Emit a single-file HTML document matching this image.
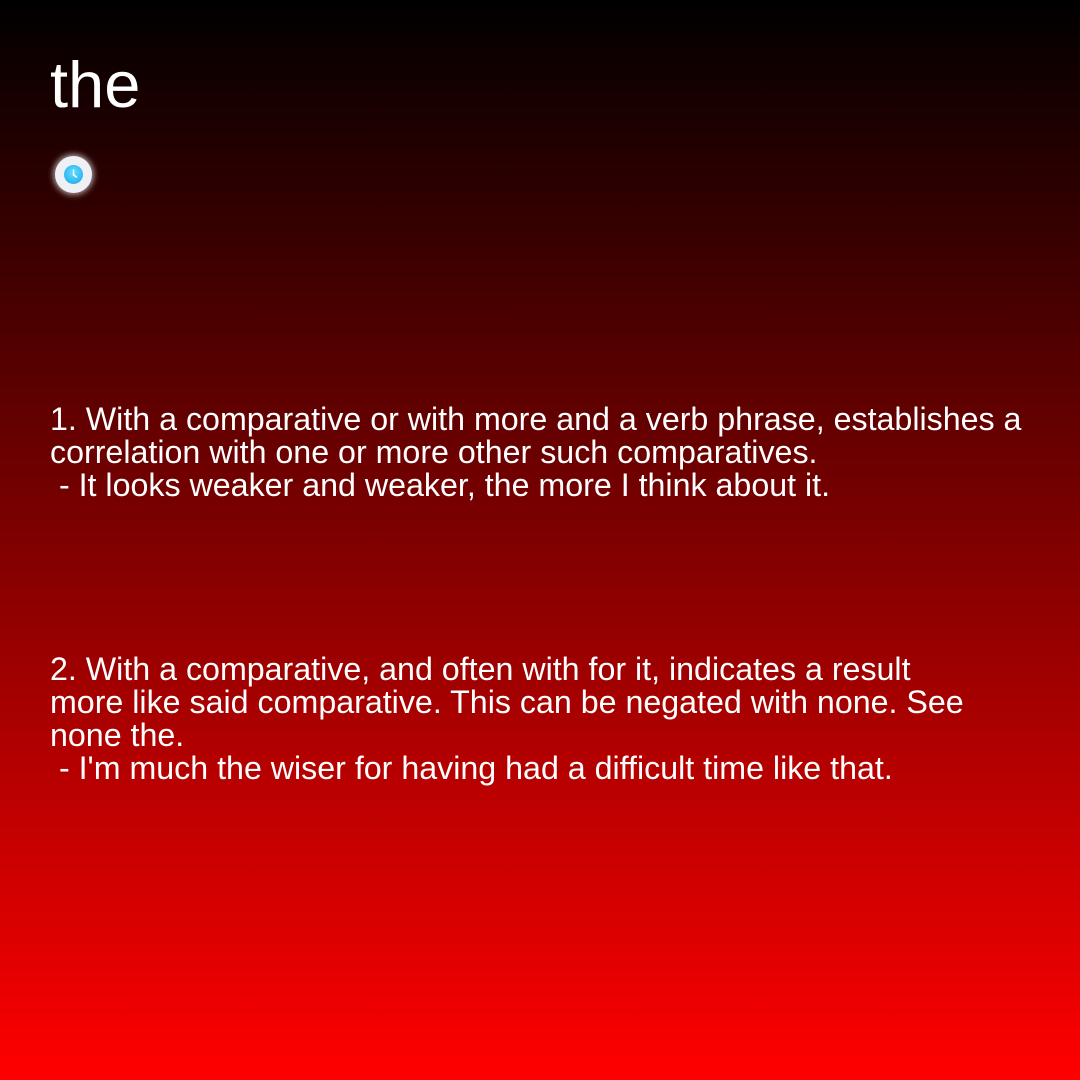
<!DOCTYPE html>
<html><head><style>
html,body{margin:0;padding:0}
body{width:1080px;height:1080px;background:linear-gradient(to bottom,#000 0%,#ff0000 100%);font-family:"Liberation Sans",sans-serif;color:#fff;position:relative;overflow:hidden}
.t{position:absolute;left:50px;top:47px;font-size:65px;line-height:76px}
.p{position:absolute;left:50px;font-size:32.2px;line-height:33px;white-space:pre}
.ic{position:absolute;left:55px;top:156px;width:37px;height:37px;border-radius:50%;background:#eef0f5;box-shadow:0 0 6px 2px rgba(255,255,255,0.6)}
.ic .b{position:absolute;left:9px;top:9px;width:19px;height:19px;border-radius:50%;background:radial-gradient(circle at 50% 40%,#5fe0ff,#1aa0e8)}
</style></head><body>
<div class="t">the</div>
<div class="ic"><div class="b"><svg width="19" height="19" viewBox="0 0 19 19"><path d="M9.5 5v5l3 2" stroke="#fff" stroke-width="1.5" fill="none" stroke-linecap="round"/></svg></div></div>
<div class="p" style="top:403px">1. With a comparative or with more and a verb phrase, establishes a
correlation with one or more other such comparatives.
 - It looks weaker and weaker, the more I think about it.</div>
<div class="p" style="top:653px">2. With a comparative, and often with for it, indicates a result
more like said comparative. This can be negated with none. See
none the.
 - I'm much the wiser for having had a difficult time like that.</div>
</body></html>
